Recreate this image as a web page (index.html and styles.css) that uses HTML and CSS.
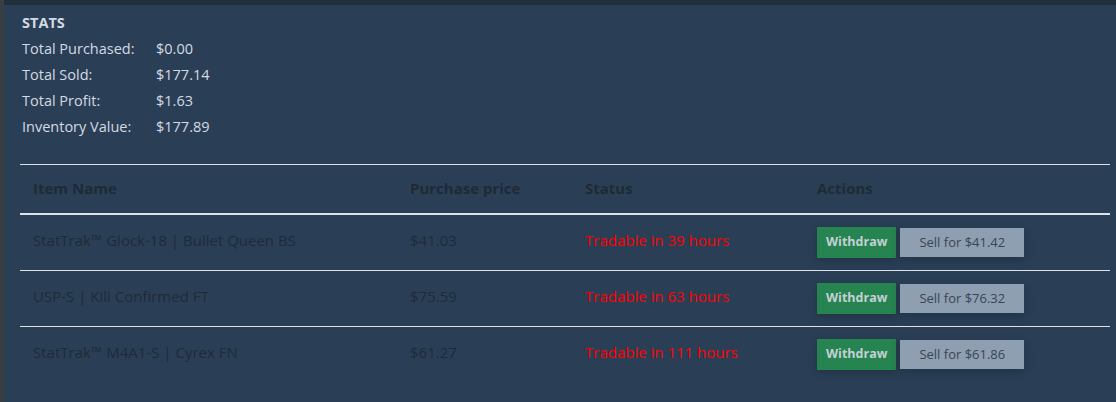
FILE: index.html
```html
<!DOCTYPE html>
<html>
<head>
<meta charset="utf-8">
<link rel="stylesheet" href="styles.css">
</head>
<body>
<div class="page">
  <div class="stats">
    <div class="stats-title">STATS</div>
    <div class="stats-grid">
      <div class="label">Total Purchased:</div><div class="value">$0.00</div>
      <div class="label">Total Sold:</div><div class="value">$177.14</div>
      <div class="label">Total Profit:</div><div class="value">$1.63</div>
      <div class="label">Inventory Value:</div><div class="value">$177.89</div>
    </div>
  </div>
  <table class="items">
    <thead>
      <tr>
        <th class="c-name">Item Name</th>
        <th class="c-price">Purchase price</th>
        <th class="c-status">Status</th>
        <th class="c-actions">Actions</th>
      </tr>
    </thead>
    <tbody>
      <tr>
        <td>StatTrak™ Glock-18 | Bullet Queen BS</td>
        <td>$41.03</td>
        <td class="status">Tradable in 39 hours</td>
        <td class="cell-actions"><div class="actions"><button class="btn btn-withdraw">Withdraw</button><button class="btn btn-sell">Sell for $41.42</button></div></td>
      </tr>
      <tr>
        <td>USP-S | Kill Confirmed FT</td>
        <td>$75.59</td>
        <td class="status">Tradable in 63 hours</td>
        <td class="cell-actions"><div class="actions"><button class="btn btn-withdraw">Withdraw</button><button class="btn btn-sell">Sell for $76.32</button></div></td>
      </tr>
      <tr>
        <td>StatTrak™ M4A1-S | Cyrex FN</td>
        <td>$61.27</td>
        <td class="status">Tradable in 111 hours</td>
        <td class="cell-actions"><div class="actions"><button class="btn btn-withdraw">Withdraw</button><button class="btn btn-sell">Sell for $61.86</button></div></td>
      </tr>
    </tbody>
  </table>
</div>
</body>
</html>
```

FILE: styles.css
```css
html, body {
  margin: 0;
  padding: 0;
  height: 100%;
}
body {
  background: #393d44;
  padding-left: 4px;
  box-sizing: border-box;
  font-family: "Open Sans", "Noto Sans", sans-serif;
  font-size: 15px;
  color: #212529;
}
.page {
  background: #2a3f56;
  border-top: 5px solid #212e3c;
  min-height: 100%;
  box-sizing: border-box;
  padding: 6px 6px 0 16px;
}
.stats {
  padding-left: 2px;
  color: #d3dae2;
  font-size: 14.5px;
}
.stats-title {
  font-weight: 700;
  line-height: 24px;
}
.stats-grid {
  display: grid;
  grid-template-columns: 134px auto;
  grid-auto-rows: 26px;
  align-items: center;
}
.items {
  margin-top: 25px;
  width: 100%;
  border-collapse: collapse;
  border-top: 1px solid #dee2e6;
}
.items th, .items td {
  text-align: left;
  padding: 11px 13px 13px;
  line-height: 24px;
  vertical-align: middle;
}
.items th {
  font-weight: 700;
  color: #1f2a35;
  border-bottom: 2px solid #dee2e6;
}
.items td {
  color: #1f2b37;
  padding-top: 9px;
  padding-bottom: 15px;
}
.items td.cell-actions {
  padding-top: 12px;
  padding-bottom: 12px;
}
.items tbody tr + tr td {
  border-top: 1px solid #dee2e6;
}
.c-name { width: 351px; }
.c-price { width: 149px; }
.c-status { width: 206px; }
.items td.status {
  color: #ff0000;
}
.actions {
  display: flex;
  align-items: center;
  gap: 4px;
}
.btn {
  border: none;
  font-family: inherit;
  line-height: 20px;
  cursor: pointer;
}
.btn-withdraw {
  background: #268450;
  color: #c5cfd6;
  font-size: 12.5px;
  font-weight: 700;
  padding: 5px 9px 6px;
  box-shadow: 0 3px 8px rgba(20, 30, 40, 0.35);
}
.btn-sell {
  background: #8e9fb2;
  color: #3a4553;
  font-size: 13px;
  padding: 4px 19px 5px;
  box-shadow: 0 3px 8px rgba(20, 30, 40, 0.35);
}
```
